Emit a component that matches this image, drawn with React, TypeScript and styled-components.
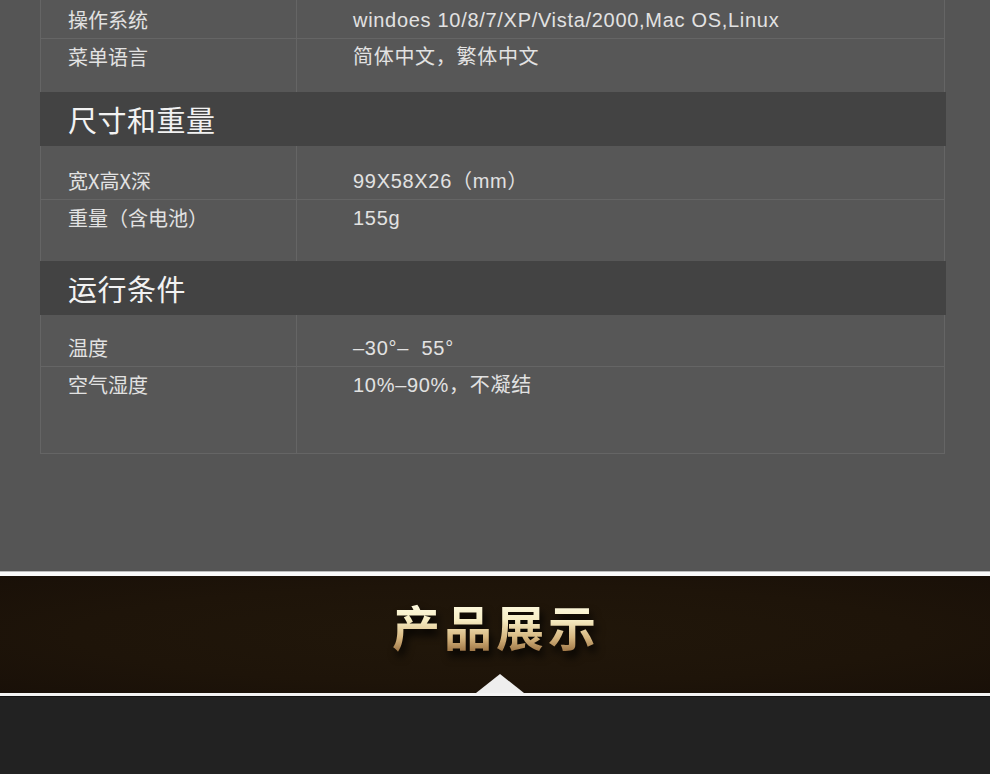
import React from "react"
import styled, { createGlobalStyle } from "styled-components"

interface SpecRow {
	label: string
	value: string
	height: number
}

interface SpecGroup {
	title?: string
	rows: SpecRow[]
}

const groups: SpecGroup[] = [
	{
		rows: [
			{ label: "操作系统", value: "windoes 10/8/7/XP/Vista/2000,Mac OS,Linux", height: 39 },
			{ label: "菜单语言", value: "简体中文，繁体中文", height: 53 },
		],
	},
	{
		title: "尺寸和重量",
		rows: [
			{ label: "宽X高X深", value: "99X58X26（mm）", height: 54 },
			{ label: "重量（含电池）", value: "155g", height: 61 },
		],
	},
	{
		title: "运行条件",
		rows: [
			{ label: "温度", value: "–30°–  55°", height: 52 },
			{ label: "空气湿度", value: "10%–90%，不凝结", height: 86 },
		],
	},
]

export default function App() {
	return (
		<>
			<GlobalStyle />
			<Page>
				<SpecTable>
					{groups.map((group, gi) => (
						<React.Fragment key={gi}>
							{group.title && <GroupHeader>{group.title}</GroupHeader>}
							<Group $last={gi === groups.length - 1}>
								{group.rows.map((row, ri) => (
									<Row key={ri} $height={row.height} $first={ri === 0}>
										<Label>{row.label}</Label>
										<Value>{row.value}</Value>
									</Row>
								))}
							</Group>
						</React.Fragment>
					))}
				</SpecTable>
				<Banner>
					<BannerTitle>产品展示</BannerTitle>
					<Pointer />
				</Banner>
				<Showcase />
			</Page>
		</>
	)
}

const GlobalStyle = createGlobalStyle`
	html, body {
		margin: 0;
		padding: 0;
		background: #222;
	}
	body {
		font-family: "Noto Sans CJK SC", "Liberation Sans", sans-serif;
		overflow: hidden;
	}
`

const Page = styled.div`
	width: 990px;
	height: 774px;
	display: flex;
	flex-direction: column;
	background: #555555;
	overflow: hidden;
`

const SpecTable = styled.div`
	width: 906px;
	margin: 0 0 118px 40px;
	display: flex;
	flex-direction: column;
`

const GroupHeader = styled.div`
	height: 54px;
	display: flex;
	align-items: center;
	padding-left: 28px;
	background: #434343;
	color: #f2f2f2;
	font-size: 29px;
	letter-spacing: 0.5px;
`

const Group = styled.div<{ $last: boolean }>`
	margin-right: 1px;
	border-left: 1px solid #656565;
	border-right: 1px solid #656565;
	${p => (p.$last ? "border-bottom: 1px solid #656565;" : "")}
	background: #575757;
`

const Row = styled.div<{ $height: number; $first: boolean }>`
	display: grid;
	grid-template-columns: 256px 1fr;
	height: ${p => p.$height}px;
	box-sizing: border-box;
	${p => (p.$first ? "border-bottom: 1px solid #656565;" : "")}

	& > * {
		height: 100%;
		box-sizing: border-box;
		display: flex;
		align-items: ${p => (p.$first ? "flex-end" : "flex-start")};
		padding-top: ${p => (p.$first ? 0 : 8)}px;
		padding-bottom: ${p => (p.$first ? 8 : 0)}px;
	}
`

const Label = styled.div`
	padding-left: 27px;
	border-right: 1px solid #656565;
	color: #e2e2e2;
	font-size: 20px;
	line-height: 20px;
`

const Value = styled.div`
	padding-left: 56px;
	color: #e2e2e2;
	font-family: "Liberation Sans", "Noto Sans CJK SC", sans-serif;
	font-size: 20px;
	line-height: 20px;
	white-space: pre;
	letter-spacing: 0.7px;
`

const Banner = styled.div`
	position: relative;
	height: 117px;
	border-top: 4px solid #fafafa;
	border-bottom: 3px solid #f4f4f4;
	box-shadow: 0 -1px 0 #bdbdbd, 0 1px 0 #111;
	background: radial-gradient(ellipse at center, #21170a 0%, #1e1409 60%, #191008 100%);
	display: flex;
	justify-content: center;
	align-items: flex-start;
`

const BannerTitle = styled.h2`
	margin: 20px 0 0 2px;
	font-family: "Noto Sans CJK SC", sans-serif;
	font-weight: 700;
	font-size: 48px;
	line-height: 58px;
	letter-spacing: 4px;
	background: linear-gradient(180deg, #fffdec 0%, #f8efc6 40%, #d6b67f 72%, #946a3b 100%);
	-webkit-background-clip: text;
	background-clip: text;
	color: transparent;
	filter: drop-shadow(3px 6px 4px rgba(0, 0, 0, 0.9));
`

const Pointer = styled.div`
	position: absolute;
	left: 476px;
	bottom: 0;
	width: 0;
	height: 0;
	border-left: 24px solid transparent;
	border-right: 24px solid transparent;
	border-bottom: 19px solid #eeeeee;
`

const Showcase = styled.div`
	flex: 1;
	margin-top: 1px;
	background: #222222;
`
